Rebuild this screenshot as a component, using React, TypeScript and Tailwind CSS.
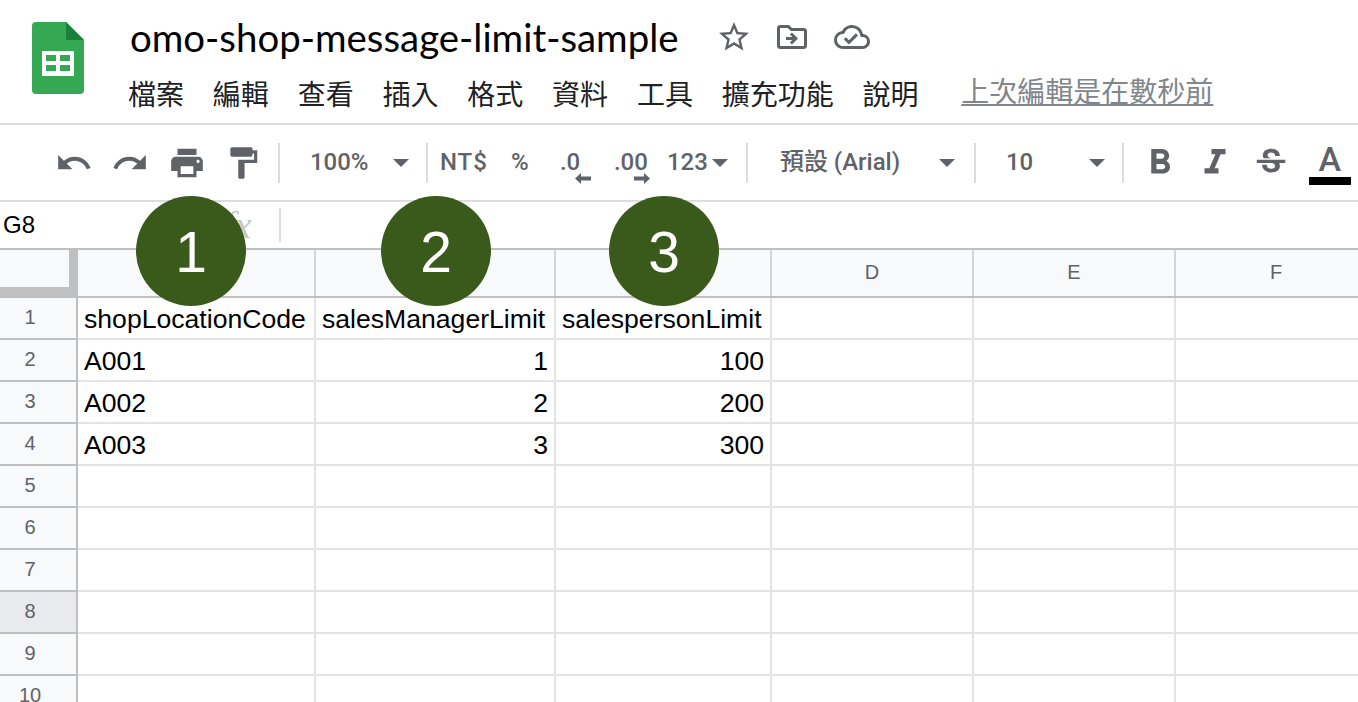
import {
  MdFormatBold,
  MdFormatItalic,
  MdFormatPaint,
  MdOutlineCloudDone,
  MdOutlineDriveFileMove,
  MdPrint,
  MdRedo,
  MdStarBorder,
  MdStrikethroughS,
  MdUndo,
} from "react-icons/md";

const menus = ["檔案", "編輯", "查看", "插入", "格式", "資料", "工具", "擴充功能", "說明"];
const cols = [
  { label: "", w: "w-[238px]" },
  { label: "", w: "w-[240px]" },
  { label: "", w: "w-[216px]" },
  { label: "D", w: "w-[202px]" },
  { label: "E", w: "w-[202px]" },
  { label: "F", w: "w-[202px]" },
];
const rows = [
  ["shopLocationCode", "salesManagerLimit", "salespersonLimit"],
  ["A001", "1", "100"],
  ["A002", "2", "200"],
  ["A003", "3", "300"],
  [], [], [], [], [], [],
];

const Sep = ({ cls }: { cls: string }) => <div className={`h-10 w-[2px] shrink-0 bg-[#dadce0] ${cls}`} />;
const Caret = ({ cls }: { cls: string }) => (
  <div className={`h-0 w-0 shrink-0 border-x-[8px] border-t-[8px] border-x-transparent border-t-[#5f6368] ${cls}`} />
);
const Label = ({ cls, children }: { cls: string; children: React.ReactNode }) => (
  <span className={`shrink-0 whitespace-nowrap pb-[2px] ${cls}`}>{children}</span>
);

const Toolbar = () => (
  <div className="flex h-[75px] items-center pl-[55px] font-['Roboto','Noto_Sans_CJK_TC',sans-serif] text-[24px] font-medium text-[#5f6368]">
    <div className="flex gap-[18.3px]">
      <MdUndo size={38} className="shrink-0" />
      <MdRedo size={38} className="shrink-0" />
      <MdPrint size={38} className="shrink-0" />
      <MdFormatPaint size={38} className="shrink-0" />
    </div>
    <Sep cls="ml-[16px]" />
    <Label cls="ml-[30px] w-[58px]">100%</Label>
    <Caret cls="ml-[25px]" />
    <Sep cls="ml-[17px]" />
    <Label cls="ml-[12px] w-[48px] tracking-[1px]">NT$</Label>
    <Label cls="ml-[23px] w-[20px]">%</Label>
    <Label cls="relative ml-[29px] w-[54px]">
      .0
      <svg viewBox="0 0 16 11" className="absolute left-[15px] top-[29px] h-[11px] w-[16px]">
        <path d="M16 3.5H6V0L0 5.5 6 11V7.5h10z" fill="#5f6368" />
      </svg>
    </Label>
    <Label cls="relative w-[53px]">
      .00
      <svg viewBox="0 0 16 11" className="absolute left-[20px] top-[29px] h-[11px] w-[16px]">
        <path d="M0 3.5h10V0l6 5.5-6 5.5V7.5H0z" fill="#5f6368" />
      </svg>
    </Label>
    <Label cls="w-[42px]">123</Label>
    <Caret cls="ml-[3px]" />
    <Sep cls="ml-[18px]" />
    <Label cls="ml-[32px] w-[120px]">預設 (Arial)</Label>
    <Caret cls="ml-[39px]" />
    <Sep cls="ml-[19px]" />
    <Label cls="ml-[30px] w-[26px]">10</Label>
    <Caret cls="ml-[57px]" />
    <Sep cls="ml-[17px]" />
    <MdFormatBold size={42} className="ml-[15px] shrink-0" />
    <MdFormatItalic size={42} className="ml-[13px] shrink-0" />
    <MdStrikethroughS size={38} className="ml-[16px] shrink-0" />
    <div className="ml-[19px] flex w-[42px] shrink-0 flex-col items-center pt-[2px]">
      <span className="text-[34px] leading-[34px]">A</span>
      <div className="mt-[1px] h-[8px] w-[42px] bg-black" />
    </div>
  </div>
);

const Badge = ({ n, cls }: { n: number; cls: string }) => (
  <div className={`absolute top-[196px] flex h-[110px] w-[110px] items-center justify-center rounded-full bg-[#3a5a1c] pt-[3px] font-['Liberation_Sans',sans-serif] text-[57px] text-white ${cls}`}>
    {n}
  </div>
);

export default function App() {
  return (
    <div className="relative h-[702px] w-[1358px] overflow-hidden bg-white">
      <header className="box-content flex h-[123px] border-b-2 border-[#dadce0]">
        <svg viewBox="0 0 52 72" className="ml-[32px] mt-[22px] h-[72px] w-[52px] shrink-0">
          <path d="M34 0H4a4 4 0 0 0-4 4v64a4 4 0 0 0 4 4h44a4 4 0 0 0 4-4V18z" fill="#34a853" />
          <path d="M34 0v18h18z" fill="#188038" />
          <path d="M10 29h32v25H10z" fill="#fff" />
          <path d="M14 33h10v6H14zM28 33h10v6H28zM14 43h10v6H14zM28 43h10v6H28z" fill="#34a853" />
        </svg>
        <div className="ml-[44px]">
          <div className="ml-[2px] mt-[13px] whitespace-nowrap font-['Lato',sans-serif] text-[38.4px] leading-[48px] text-black">omo-shop-message-limit-sample</div>
          <div className="mt-[12px] flex gap-[28.8px] font-['Noto_Sans_CJK_TC',sans-serif] text-[28px] leading-[40px] text-[#202124]">
            {menus.map((m) => (
              <span key={m} className="shrink-0">{m}</span>
            ))}
            <span className="ml-[14px] shrink-0 -translate-y-[3px] text-[#80868b] underline">上次編輯是在數秒前</span>
          </div>
        </div>
        <div className="absolute left-[716px] top-[19px] flex items-center text-[#5f6368]">
          <MdStarBorder size={36} />
          <MdOutlineDriveFileMove size={36} className="ml-[22px]" />
          <MdOutlineCloudDone size={36} className="ml-[24px]" />
        </div>
      </header>

      <div className="box-content border-b-2 border-[#dadce0]">
        <Toolbar />
      </div>

      <div className="flex h-[46px] items-center">
        <span className="ml-[3px] w-[221px] shrink-0 font-['Liberation_Sans',sans-serif] text-[24px] text-black">G8</span>
        <span className="w-[55px] shrink-0 font-['Liberation_Serif',serif] text-[38px] leading-[46px] italic text-[#c4c7c5]">fx</span>
        <div className="h-[34px] w-[2px] bg-[#dadce0]" />
      </div>

      <div className="flex h-[50px] border-y-2 border-[#c0c0c0] bg-[#f8f9fa] font-['Liberation_Sans',sans-serif] text-[20px] text-[#5f6368]">
        <div className="w-[78px] shrink-0 border-r-[9px] border-b-[9px] border-[#c0c0c0]" />
        {cols.map((c, i) => (
          <div key={i} className={`flex shrink-0 items-center justify-center border-r-2 border-[#d4d4d4] pb-[2px] ${c.w}`}>
            {c.label}
          </div>
        ))}
      </div>

      {rows.map((r, i) => (
        <div key={i} className="flex h-[42px] border-b-2 border-[#e2e3e3] font-['Liberation_Sans',sans-serif] text-[26.6px] text-black">
          <div className={`-mb-[2px] flex w-[78px] shrink-0 items-center justify-center border-r-2 border-b-2 border-[#c0c0c0] pr-[16px] pb-[2px] text-[20px] text-[#5f6368] ${i === 7 ? "bg-[#e8eaed]" : "bg-[#f8f9fa]"}`}>
            {i + 1}
          </div>
          {cols.map((c, j) => (
            <div
              key={j}
              className={`flex shrink-0 items-center border-r-2 border-[#e2e3e3] px-[6px] pt-[4px] ${c.w} ${j > 0 && i > 0 ? "justify-end" : ""}`}
            >
              {r[j]}
            </div>
          ))}
        </div>
      ))}

      <Badge n={1} cls="left-[136px]" />
      <Badge n={2} cls="left-[381px]" />
      <Badge n={3} cls="left-[609px]" />
    </div>
  );
}
